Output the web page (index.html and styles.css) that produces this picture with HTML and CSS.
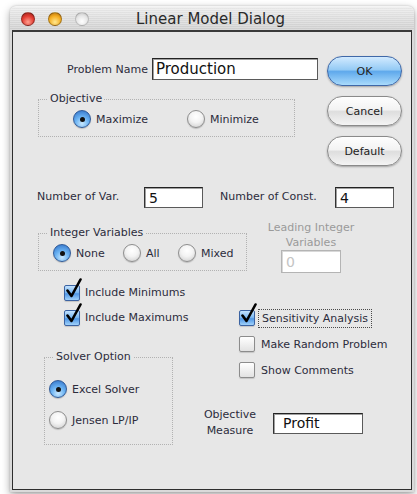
FILE: index.html
```html
<!DOCTYPE html>
<html lang="en">
<head>
<meta charset="utf-8">
<title>Linear Model Dialog</title>
<link rel="stylesheet" href="styles.css">
</head>
<body>
<div class="window">
  <div class="titlebar">
    <div class="lights">
      <span class="light red"></span>
      <span class="light yellow"></span>
      <span class="light idle"></span>
    </div>
    <div class="title">Linear Model Dialog</div>
  </div>

  <div class="panel">
    <div class="top">
      <div class="top-left">
        <div class="name-row">
          <span class="label">Problem Name</span>
          <div class="field name-field">Production</div>
        </div>
        <div class="group objective">
          <span class="legend">Objective</span>
          <div class="radio-row obj-radios">
            <span class="radio-item"><span class="radio on"></span>Maximize</span>
            <span class="radio-item"><span class="radio"></span>Minimize</span>
          </div>
        </div>
      </div>
      <div class="buttons">
        <button class="btn primary">OK</button>
        <button class="btn">Cancel</button>
        <button class="btn">Default</button>
      </div>
    </div>

    <div class="num-row">
      <span class="label lbl-var">Number of Var.</span>
      <div class="field num">5</div>
      <span class="label lbl-const">Number of Const.</span>
      <div class="field num">4</div>
    </div>

    <div class="int-row">
      <div class="group integer">
        <span class="legend">Integer Variables</span>
        <div class="radio-row int-radios">
          <span class="radio-item"><span class="radio on"></span>None</span>
          <span class="radio-item"><span class="radio"></span>All</span>
          <span class="radio-item"><span class="radio"></span>Mixed</span>
        </div>
      </div>
      <div class="leading">
        <div class="leading-label">Leading Integer<br>Variables</div>
        <div class="field disabled">0</div>
      </div>
    </div>

    <div class="lower">
      <div class="lower-left">
        <div class="check-row">
          <span class="check on"><svg class="tick" width="18" height="22" viewBox="0 0 18 22"><path d="M2.5 12.5 L6.5 18 L15.5 1.5" fill="none" stroke="#000" stroke-width="2.6" stroke-linecap="round" stroke-linejoin="round"/></svg></span>
          <span>Include Minimums</span>
        </div>
        <div class="check-row">
          <span class="check on"><svg class="tick" width="18" height="22" viewBox="0 0 18 22"><path d="M2.5 12.5 L6.5 18 L15.5 1.5" fill="none" stroke="#000" stroke-width="2.6" stroke-linecap="round" stroke-linejoin="round"/></svg></span>
          <span>Include Maximums</span>
        </div>
        <div class="group solver">
          <span class="legend">Solver Option</span>
          <div class="radio-col">
            <span class="radio-item"><span class="radio on"></span>Excel Solver</span>
            <span class="radio-item"><span class="radio"></span>Jensen LP/IP</span>
          </div>
        </div>
      </div>

      <div class="lower-right">
        <div class="check-row first">
          <span class="check on"><svg class="tick" width="18" height="22" viewBox="0 0 18 22"><path d="M2.5 12.5 L6.5 18 L15.5 1.5" fill="none" stroke="#000" stroke-width="2.6" stroke-linecap="round" stroke-linejoin="round"/></svg></span>
          <span class="focus">Sensitivity Analysis</span>
        </div>
        <div class="check-row">
          <span class="check"></span>
          <span>Make Random Problem</span>
        </div>
        <div class="check-row">
          <span class="check"></span>
          <span>Show Comments</span>
        </div>
        <div class="measure-row">
          <div class="measure-label">Objective<br>Measure</div>
          <div class="field measure">Profit</div>
        </div>
      </div>
    </div>
  </div>
</div>
</body>
</html>
```

FILE: styles.css
```css
* {
  box-sizing: border-box;
}

html,
body {
  margin: 0;
  padding: 0;
  background: #ffffff;
}

body {
  width: 417px;
  height: 494px;
  overflow: hidden;
  font-family: "DejaVu Sans", "Liberation Sans", sans-serif;
  font-size: 11px;
  color: #2c2c3c;
}

/* ---------- window chrome ---------- */

.window {
  margin: 6px 0 0 10px;
  width: 404px;
  padding: 0 2px 2px 2px;
  background: #dadada;
  border-radius: 6px 6px 0 0;
  box-shadow: 0 3px 9px rgba(0, 0, 0, 0.35), 0 0 2px rgba(0, 0, 0, 0.22);
}

.titlebar {
  height: 24px;
  margin: 0 -2px;
  display: flex;
  align-items: center;
  border-radius: 6px 6px 0 0;
  background:
    repeating-linear-gradient(to bottom, rgba(255, 255, 255, 0.18) 0 1px, rgba(0, 0, 0, 0.025) 1px 2px),
    linear-gradient(#ededed, #d2d2d2);
  border-top: 1px solid #f4f4f4;
}

.lights {
  display: flex;
  gap: 13px;
  padding-left: 11px;
}

.light {
  width: 14px;
  height: 14px;
  border-radius: 50%;
  border: 1px solid rgba(0, 0, 0, 0.3);
}

.light.red {
  background: radial-gradient(circle at 50% 75%, #ffa090 0%, #e23a30 55%, #92221a 100%);
}

.light.yellow {
  background: radial-gradient(circle at 50% 75%, #ffe890 0%, #f4ad22 55%, #ad6a0e 100%);
}

.light.idle {
  border-color: rgba(0, 0, 0, 0.18);
  background: radial-gradient(circle at 50% 70%, #ffffff 0%, #e6e6e6 55%, #bcbcbc 100%);
}

.title {
  margin-left: 47px;
  font-size: 15px;
  color: #2a2a2a;
}

.panel {
  height: 460px;
  border: 1px solid #2e2e2e;
  border-top: 2px solid #3a3a3a;
  background: #e7e7e7;
}

/* ---------- common controls ---------- */

.label {
  white-space: nowrap;
}

.field {
  display: flex;
  align-items: center;
  background: #ffffff;
  border: 1px solid #5a5a5a;
  border-top-color: #222222;
  border-left-color: #333333;
  box-shadow: inset 1px 1px 0 #a0a0a0;
  color: #111111;
  font-size: 14px;
  padding-left: 4px;
  white-space: nowrap;
}

.group {
  position: relative;
  border: 1px dotted #b2b2b2;
}

.legend {
  position: absolute;
  top: -8px;
  left: 9px;
  padding: 0 2px;
  line-height: 14px;
  background: #e7e7e7;
  white-space: nowrap;
}

.radio-item {
  display: flex;
  align-items: center;
  gap: 5px;
  white-space: nowrap;
}

.radio {
  position: relative;
  flex: none;
  width: 18px;
  height: 18px;
  border-radius: 50%;
  border: 1px solid #8e8e8e;
  background: radial-gradient(circle at 50% 35%, #ffffff 0%, #f3f3f3 45%, #c9c9c9 100%);
  box-shadow: 0 1px 1px rgba(0, 0, 0, 0.18);
}

.radio.on {
  border-color: #2f5a98;
  background: radial-gradient(circle at 50% 78%, #c8e8ff 0%, #6ab2f2 45%, #2b6cc4 100%);
}

.radio.on::after {
  content: "";
  position: absolute;
  left: 50%;
  top: 50%;
  width: 5px;
  height: 5px;
  margin: -2.5px 0 0 -2.5px;
  border-radius: 50%;
  background: #111111;
}

.check-row {
  display: flex;
  align-items: center;
  white-space: nowrap;
}

.check {
  position: relative;
  flex: none;
  width: 16px;
  height: 16px;
  border-radius: 2px;
  border: 1px solid #8c8c8c;
  background: linear-gradient(#ffffff, #e2e2e2);
  box-shadow: 0 1px 1px rgba(0, 0, 0, 0.15);
}

.check.on {
  border-color: #3b63a2;
  background: linear-gradient(#c4e3ff 0%, #74b4f0 50%, #4e95e4 55%, #a0d2fb 100%);
}

.tick {
  position: absolute;
  left: 0;
  top: -8px;
}

.btn {
  width: 75px;
  height: 30px;
  border-radius: 15px;
  border: 1px solid #8a8a8a;
  background: linear-gradient(#fefefe 0%, #f3f3f3 45%, #dedede 52%, #f4f4f4 100%);
  box-shadow: 0 1px 2px rgba(0, 0, 0, 0.3);
  font-family: "DejaVu Sans", "Liberation Sans", sans-serif;
  font-size: 11px;
  color: #222222;
  padding: 0;
}

.btn.primary {
  border-color: #3f68a8;
  background: linear-gradient(#d2eaff 0%, #95cbf5 45%, #5fa9ec 52%, #a9dbfc 100%);
}

/* ---------- top block: name, objective, buttons ---------- */

.top {
  display: flex;
  padding-top: 24px;
}

.top-left {
  width: 314px;
  padding-top: 2px;
}

.name-row {
  width: 305px;
  height: 22px;
  display: flex;
  align-items: center;
  justify-content: flex-end;
  gap: 4px;
}

.name-field {
  width: 166px;
  height: 22px;
  font-size: 15px;
  padding-left: 3px;
}

.objective {
  margin: 19px 0 0 25px;
  width: 257px;
  height: 38px;
}

.obj-radios {
  display: grid;
  grid-template-columns: 114px auto;
  padding: 10px 0 0 34px;
}

.buttons {
  display: flex;
  flex-direction: column;
  gap: 10px;
}

/* ---------- variable / constraint counts ---------- */

.num-row {
  margin-top: 21px;
  height: 21px;
  display: flex;
  align-items: center;
  padding-left: 24px;
}

.lbl-var {
  width: 107px;
  margin-top: -3px;
}

.lbl-const {
  width: 115px;
  margin-left: 17px;
  margin-top: -3px;
}

.num {
  width: 59px;
  height: 21px;
}

/* ---------- integer variables ---------- */

.int-row {
  margin-top: 12px;
  display: flex;
  align-items: flex-start;
}

.integer {
  margin: 13px 0 0 25px;
  width: 209px;
  height: 38px;
}

.int-radios {
  display: grid;
  grid-template-columns: 70px 55px auto;
  padding: 10px 0 0 14px;
}

.leading {
  margin-left: 19px;
  width: 90px;
  display: flex;
  flex-direction: column;
  align-items: center;
  color: #9a9a9a;
}

.leading-label {
  text-align: center;
  line-height: 15px;
}

.field.disabled {
  width: 60px;
  height: 23px;
  border-color: #b4b4b4;
  box-shadow: inset 1px 1px 0 #d8d8d8;
  color: #c4c4c4;
}

/* ---------- options ---------- */

.lower {
  margin-top: 7px;
  display: flex;
}

.lower-left {
  width: 190px;
}

.lower-left .check-row {
  height: 25px;
  padding-left: 51px;
  gap: 5px;
}

.solver {
  margin: 27px 0 0 31px;
  width: 129px;
  height: 88px;
}

.radio-col {
  display: flex;
  flex-direction: column;
  gap: 13px;
  padding: 22px 0 0 4px;
}

.lower-right {
  display: flex;
  flex-direction: column;
}

.lower-right .check-row {
  height: 26px;
  padding-left: 36px;
  gap: 6px;
}

.lower-right .check-row.first {
  margin-top: 25px;
}

.focus {
  margin-left: -3px;
  padding: 2px 3px;
  border: 1px dotted #4a4a4a;
}

.measure-row {
  margin-top: 24px;
  display: flex;
  align-items: center;
}

.measure-label {
  width: 54px;
  text-align: center;
  line-height: 16px;
}

.measure {
  margin-left: 16px;
  width: 90px;
  height: 21px;
  padding-left: 9px;
}
```
